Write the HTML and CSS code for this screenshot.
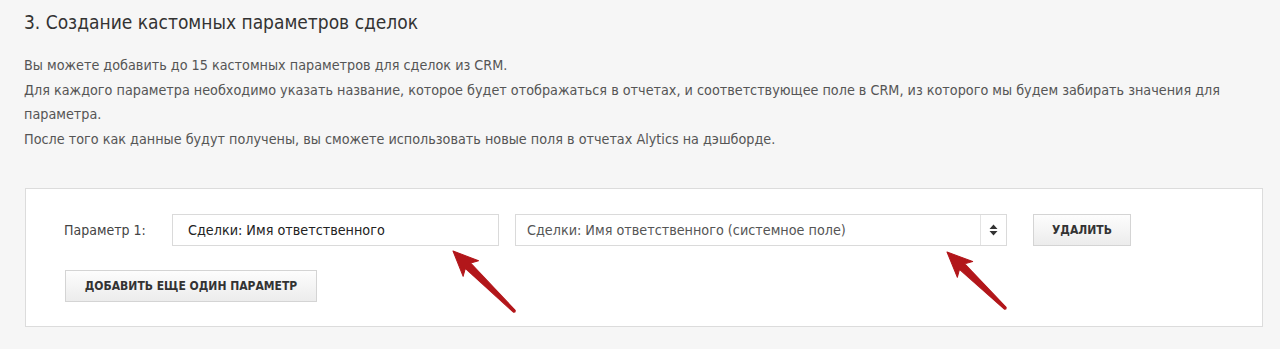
FILE: index.html
```html
<!DOCTYPE html>
<html lang="ru">
<head>
<meta charset="utf-8">
<link rel="stylesheet" href="styles.css">
</head>
<body>
<div class="page">
  <h2 class="title">3. Создание кастомных параметров сделок</h2>
  <div class="intro">
    <p>Вы можете добавить до 15 кастомных параметров для сделок из CRM.</p>
    <p>Для каждого параметра необходимо указать название, которое будет отображаться в отчетах, и соответствующее поле в CRM, из которого мы будем забирать значения для параметра.</p>
    <p>После того как данные будут получены, вы сможете использовать новые поля в отчетах Alytics на дэшборде.</p>
  </div>
  <div class="panel">
    <div class="param-row">
      <span class="label">Параметр 1:</span>
      <div class="input">Сделки: Имя ответственного</div>
      <div class="select">
        <span class="select-text">Сделки: Имя ответственного (системное поле)</span>
        <span class="select-arrow">
          <svg width="9" height="12" viewBox="0 0 9 12"><path d="M4.5 0.5 L8.5 5 H0.5 Z M0.5 7 H8.5 L4.5 11.5 Z" fill="#333"/></svg>
        </span>
      </div>
      <button class="btn btn-del">УДАЛИТЬ</button>
    </div>
    <button class="btn btn-add">ДОБАВИТЬ ЕЩЕ ОДИН ПАРАМЕТР</button>
  </div>
</div>
<svg class="arrows" width="1280" height="349" viewBox="0 0 1280 349">
  <g fill="#b2161a" stroke="#b2161a" stroke-width="1" stroke-linejoin="round">
    <polygon transform="translate(453,251) rotate(44.5)" points="0,0 25,-11 21,-3.8 86,-1.3 87,0 86,1.3 21,3.8 25,11"/>
    <polygon transform="translate(947,252) rotate(44)" points="0,0 25,-11 21,-3.8 81,-1.3 82,0 81,1.3 21,3.8 25,11"/>
  </g>
</svg>
</body>
</html>
```
FILE: styles.css
```css
html, body {
  margin: 0;
  padding: 0;
  background: #f6f6f6;
}
body {
  font-family: "DejaVu Sans Condensed", "DejaVu Sans", sans-serif;
  color: #444;
  position: relative;
  height: 349px;
  overflow: hidden;
}
.page {
  padding: 10px 17px 0 24px;
}
.title {
  margin: 0;
  font-size: 19px;
  line-height: 24px;
  font-weight: normal;
  color: #333;
}
.intro {
  margin-top: 19px;
  font-size: 14.25px;
  line-height: 24.5px;
  color: #555;
}
.intro p {
  margin: 0;
}
.panel {
  margin-top: 37px;
  margin-left: 1px;
  background: #fff;
  border: 1px solid #dcdcdc;
  padding: 25px 24px 24px 38px;
  display: flex;
  flex-direction: column;
  align-items: flex-start;
  gap: 24px;
}
.param-row {
  display: flex;
  align-items: center;
}
.label {
  width: 108px;
  font-size: 14px;
  color: #444;
}
.input {
  box-sizing: border-box;
  width: 327px;
  height: 32px;
  border: 1px solid #dadada;
  padding: 0 15px;
  font-size: 14.25px;
  line-height: 30px;
  color: #222;
}
.select {
  box-sizing: border-box;
  margin-left: 16px;
  width: 492px;
  height: 32px;
  border: 1px solid #dadada;
  display: flex;
  font-size: 14.25px;
  color: #555;
}
.select-text {
  flex: 1;
  padding-left: 11px;
  line-height: 30px;
}
.select-arrow {
  width: 25px;
  border-left: 1px solid #e3e3e3;
  display: flex;
  align-items: center;
  justify-content: center;
}
.btn {
  box-sizing: border-box;
  height: 32px;
  border: 1px solid #d4d4d4;
  background: linear-gradient(#fdfdfd, #ececec);
  font-family: "DejaVu Sans Condensed", "DejaVu Sans", sans-serif;
  font-weight: bold;
  font-size: 12px;
  color: #333;
  padding: 0;
}
.btn-del {
  margin-left: 26px;
  width: 98px;
}
.btn-add {
  margin-left: 1px;
  width: 252px;
}
.arrows {
  position: absolute;
  left: 0;
  top: 0;
  pointer-events: none;
}
```
